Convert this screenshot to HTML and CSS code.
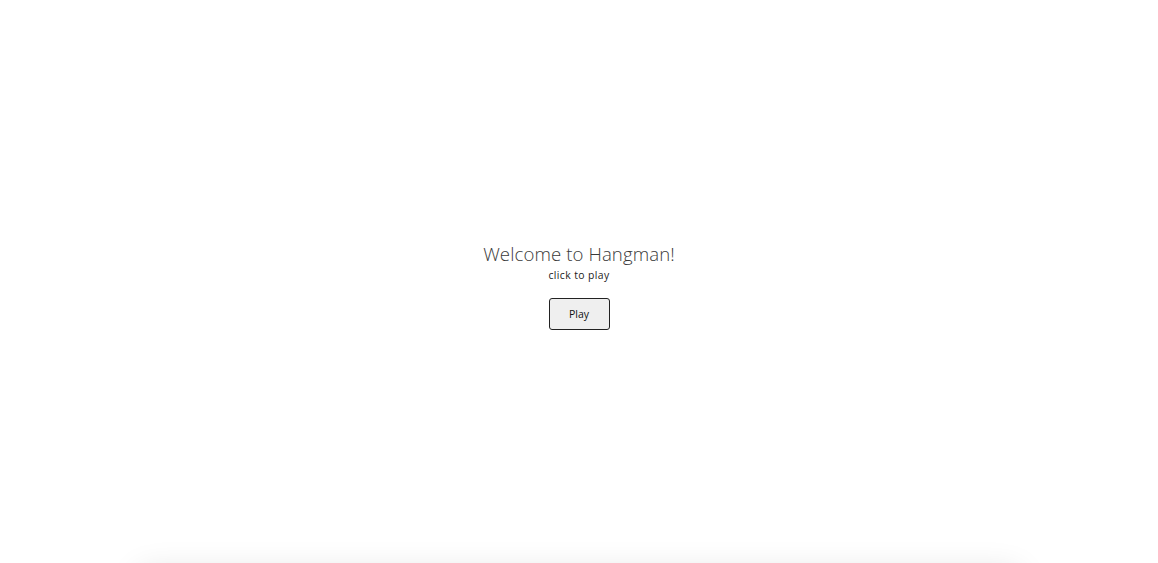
FILE: index.html
```html
<!DOCTYPE html>
<html lang="en">
<head>
<meta charset="utf-8">
<title>Hangman</title>
<link rel="stylesheet" href="styles.css">
</head>
<body>
<main class="page">
  <section class="welcome">
    <h1 class="title">Welcome to Hangman!</h1>
    <p class="subtitle">click to play</p>
    <button class="play-btn" type="button">Play</button>
  </section>
  <section class="board"></section>
</main>
</body>
</html>
```
FILE: styles.css
```css
html, body {
  margin: 0;
  background: #ffffff;
}
body {
  font-family: "Open Sans", "Liberation Sans", sans-serif;
  color: #222;
}
.page {
  height: 563px;
  overflow: hidden;
}
.welcome {
  height: 563px;
  display: flex;
  flex-direction: column;
  align-items: center;
  padding-top: 241px;
  box-sizing: border-box;
}
.title {
  margin: 0;
  font-size: 18.6px;
  font-weight: 300;
  line-height: 26px;
  color: #3a3a3a;
  letter-spacing: 0.1px;
}
.subtitle {
  margin: 0;
  font-size: 10.4px;
  line-height: 16px;
  color: #222;
  letter-spacing: 0.4px;
}
.play-btn {
  margin-top: 15px;
  width: 61px;
  height: 32px;
  background: #efefef;
  border: 1px solid #222;
  border-radius: 3px;
  font-family: "Open Sans", "Liberation Sans", sans-serif;
  font-size: 10.5px;
  color: #111;
  padding: 0;
}
.board {
  width: 880px;
  height: 400px;
  margin: 8px auto 0;
  background: #fff;
  box-shadow: 0 0 30px rgba(0, 0, 0, 0.12);
}
```
